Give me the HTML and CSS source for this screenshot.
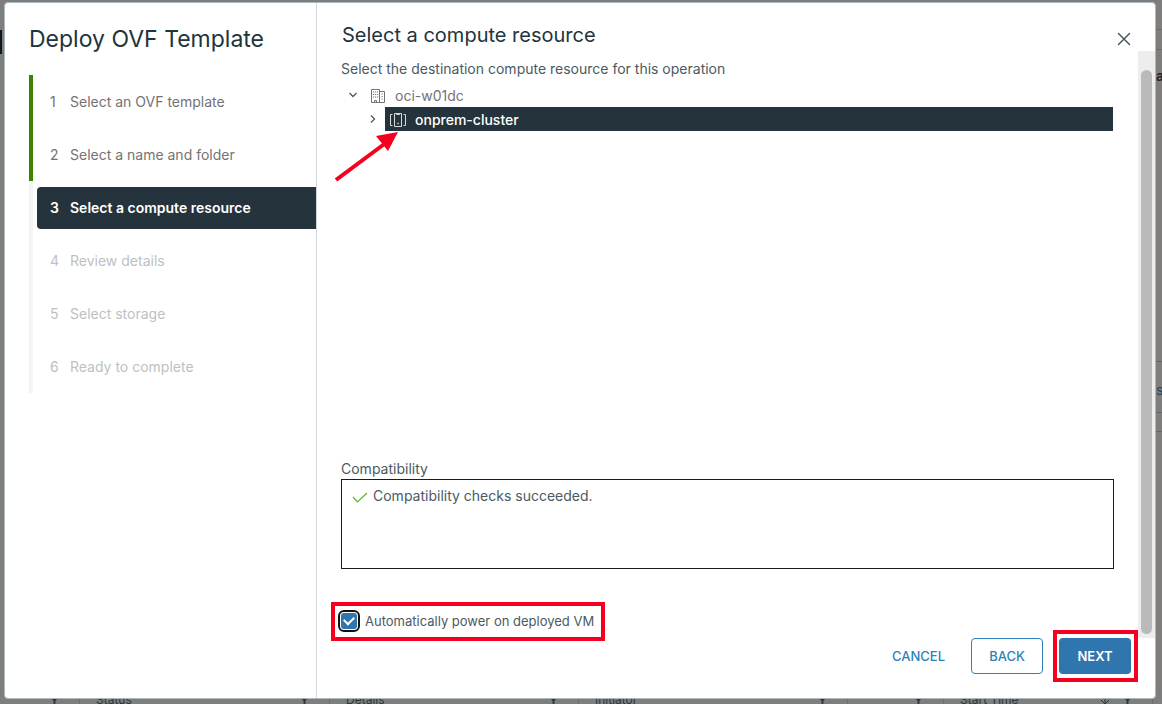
FILE: index.html
```html
<!DOCTYPE html>
<html lang="en">
<head>
<meta charset="utf-8">
<title>Deploy OVF Template</title>
<link rel="stylesheet" href="styles.css">
</head>
<body>
<svg class="defs" aria-hidden="true">
  <symbol id="filter" viewBox="0 0 10 12"><path d="M0 1h10L6 6v6H4V6z" fill="currentColor"/></symbol>
</svg>
<div class="workspace" aria-hidden="true">
  <div class="workspace-body">
    <div class="strip-left"><span class="notch"></span></div>
    <div class="strip-right">
      <span class="peek-head"></span>
      <span class="peek peek-dark">ag</span>
      <span class="peek peek-link">ss</span>
      <span class="peek-foot"></span>
    </div>
  </div>
  <div class="task-columns">
    <div class="col"><span></span><svg class="filter"><use href="#filter"/></svg></div>
    <div class="col"><span>Status</span><svg class="filter"><use href="#filter"/></svg></div>
    <div class="col"><span>Details</span><svg class="filter"><use href="#filter"/></svg></div>
    <div class="col"><span>Initiator</span><svg class="filter"><use href="#filter"/></svg></div>
    <div class="col"><span></span><svg class="filter"><use href="#filter"/></svg></div>
    <div class="col"><span>Start Time</span><svg class="sort" viewBox="0 0 10 12"><path d="M5 0v11M1 7l4 4 4-4" fill="none" stroke="currentColor"/></svg><svg class="filter"><use href="#filter"/></svg></div>
    <div class="col"></div>
  </div>
</div>

<div class="dialog" role="dialog" aria-labelledby="wizard-title">
  <nav class="steps-pane">
    <h1 class="wizard-title" id="wizard-title">Deploy OVF Template</h1>
    <ol class="steps">
      <li class="step done"><button class="step-button"><span class="num">1</span>Select an OVF template</button></li>
      <li class="step done"><button class="step-button"><span class="num">2</span>Select a name and folder</button></li>
      <li class="step current"><button class="step-button" aria-current="step"><span class="num">3</span>Select a compute resource</button></li>
      <li class="step"><button class="step-button" disabled><span class="num">4</span>Review details</button></li>
      <li class="step"><button class="step-button" disabled><span class="num">5</span>Select storage</button></li>
      <li class="step"><button class="step-button" disabled><span class="num">6</span>Ready to complete</button></li>
    </ol>
  </nav>

  <main class="page">
    <header class="page-header">
      <h2 class="page-title">Select a compute resource</h2>
      <button class="close" aria-label="Close">
        <svg width="14" height="14" viewBox="0 0 14 14"><path d="M1.500 1.500l11 11M12.500 1.500l-11 11" fill="none" stroke="currentColor" stroke-width="1.500" stroke-linecap="round"/></svg>
      </button>
    </header>

    <div class="page-body">
      <div class="content">
        <p class="intro">Select the destination compute resource for this operation</p>
        <div class="tree" role="tree">
          <div class="node" role="treeitem" aria-expanded="true">
            <button class="toggle" aria-label="Collapse"><svg width="10" height="10" viewBox="0 0 10 10"><path d="M1.500 3L5 6.500 8.500 3" fill="none" stroke="currentColor" stroke-width="1.300"/></svg></button>
            <span class="node-label">
              <svg width="16" height="16" viewBox="0 0 16 16" fill="none" stroke="currentColor"><path d="M1.500 14.500v-13h8v13zM9.500 3.500h5v11h-5M4.500 14.500v-2h2v2"/><path d="M3 4h1.200M5 4h1.200M7 4h1.200M3 6.500h1.200M5 6.500h1.200M7 6.500h1.200M3 9h1.200M5 9h1.200M7 9h1.200M11.500 6h1.200M11.500 8.500h1.200M11.500 11h1.200"/></svg>
              oci-w01dc
            </span>
          </div>
          <div class="node child" role="treeitem" aria-selected="true">
            <button class="toggle" aria-label="Expand"><svg width="10" height="10" viewBox="0 0 10 10"><path d="M3 1.500L6.500 5 3 8.500" fill="none" stroke="currentColor" stroke-width="1.300"/></svg></button>
            <span class="node-label selected">
              <svg width="16" height="16" viewBox="0 0 16 16" fill="none" stroke="#d5dadd"><path d="M2.500 2.500h-2v11h2M13.500 2.500h2v11h-2M4.500 1.500h7v13h-7zM6.500 1.500v1h3v-1"/><path d="M7.300 11.500h1.400" stroke-width="1.500"/></svg>
              onprem-cluster
            </span>
          </div>
          <svg class="arrow" width="66" height="52" viewBox="0 0 66 52" aria-hidden="true"><path d="M1 50L52 12" stroke="#f60020" stroke-width="4"/><path d="M63 2L41 6l12 15z" fill="#f60020"/></svg>
        </div>
        <section class="compat">
          <h3 class="compat-title">Compatibility</h3>
          <div class="compat-box">
            <svg width="16" height="16" viewBox="0 0 16 16"><path d="M1 8l4.500 5L15 4" fill="none" stroke="#5eb715" stroke-width="1.200"/></svg>
            <span>Compatibility checks succeeded.</span>
          </div>
        </section>
        <label class="power" for="power-on">
          <input class="power-check" type="checkbox" id="power-on" checked>
          Automatically power on deployed VM
        </label>
      </div>
      <div class="scroll-track"><div class="scroll-thumb"></div></div>
    </div>

    <footer class="actions">
      <button class="btn link">CANCEL</button>
      <button class="btn outline">BACK</button>
      <button class="btn primary">NEXT</button>
    </footer>
  </main>
</div>
</body>
</html>
```

FILE: styles.css
```css
* { box-sizing: border-box; }

body {
  margin: 0;
  height: 100vh;
  overflow: hidden;
  position: relative;
  background: #7f7e7c;
  color: #4b5a62;
  font: 14px/20px Inter, "Open Sans", sans-serif;
}

button { font: inherit; color: inherit; background: none; border: 0; padding: 0; text-align: left; }
h1, h2, h3, p, ol { margin: 0; padding: 0; font-weight: 400; }
svg { display: block; flex: none; }
.defs { position: absolute; width: 0; height: 0; }

/* Dimmed workspace behind the dialog */
.workspace { height: 100%; display: flex; flex-direction: column; }
.workspace-body { flex: 1; display: flex; justify-content: space-between; min-height: 0; }
.strip-left { width: 4px; padding-top: 30px; }
.notch { display: block; width: 2px; height: 24px; background: #10181b; }
.strip-right { width: 7px; display: flex; flex-direction: column; border-left: 1px solid #777; }
.peek-head { margin-top: 29px; height: 21px; border: 1px solid #6a6e70; border-width: 1px 0; }
.peek { overflow: hidden; white-space: nowrap; }
.peek-dark { margin-top: 16px; color: #1e2429; font-weight: 600; }
.peek-link { margin-top: 275px; height: 52px; padding-top: 18px; border: 1px solid #666; border-width: 1px 0; color: #1c4a66; }
.peek-foot { margin-top: 18px; border-top: 1px solid #666; }
.task-columns {
  height: 16px;
  overflow: hidden;
  display: grid;
  grid-template-columns: 80fr 250fr 249fr 269fr 96fr 209fr 9fr;
  font-size: 12px;
  line-height: 24px;
  color: #303538;
}
.col { display: flex; gap: 13px; padding: 0 20px 0 16px; border-right: 1px solid #6c6c6c; min-width: 0; }
.col > span { flex: 1; }
.col:last-child { border: 0; padding: 0; }
.filter { width: 9px; height: 12px; margin-top: 7px; }
.sort { width: 10px; height: 12px; margin-top: 5px; }

/* Dialog */
.dialog {
  position: absolute;
  inset: 2px 6px 5px 4px;
  display: flex;
  background: #fff;
  border: 1px solid #a9b9c2;
  border-radius: 4px;
}
.steps-pane { flex: 0 0 312px; border-right: 1px solid #d3dade; }
.wizard-title { padding: 20px 0 0 24px; font-size: 23px; line-height: 32px; color: #22343c; }
.steps { list-style: none; margin: 20px 0 0 24px; }
.step { height: 53px; padding: 6px 0 5px 4px; border-left: 4px solid #f4f4f4; color: #bcc1c4; }
.step.done { border-color: #3c8500; color: #737373; }
.step-button { display: flex; align-items: center; width: 100%; height: 42px; padding-left: 13px; border-radius: 4px 0 0 4px; }
.num { width: 20px; }
.current .step-button { background: #25333d; color: #fff; font-weight: 600; }

.page { flex: 1; display: flex; flex-direction: column; min-width: 0; }
.page-header { height: 48px; display: flex; justify-content: space-between; align-items: flex-start; padding: 18px 24px 0 25px; }
.page-title { font-size: 20px; line-height: 28px; color: #22343c; }
.close { width: 14px; height: 14px; margin-top: 11px; color: #4b5a62; }

.page-body { flex: 1; display: flex; min-height: 0; }
.content { flex: 1; display: flex; flex-direction: column; padding: 8px 24px 0 24px; min-width: 0; }
.tree { flex: 1; position: relative; padding: 4px 1px 0 4px; }
.node { display: flex; align-items: center; height: 24px; color: #737373; }
.child { padding-left: 20px; }
.toggle { width: 20px; padding-left: 3px; color: #4b5a62; }
.node-label { flex: 1; display: flex; align-items: center; gap: 9px; height: 24px; padding: 2px 0 0 5px; }
.selected { background: #25333d; color: #fff; font-weight: 500; }
.arrow { position: absolute; left: -6px; top: 51px; }

.compat-title { font-size: 14px; line-height: 20px; }
.compat-box { display: flex; gap: 5px; height: 90px; padding: 6px 10px; border: 1px solid #1b1b1b; }
.compat-box svg { margin-top: 3px; }

.power {
  align-self: flex-start;
  display: flex;
  align-items: center;
  gap: 8px;
  height: 39px;
  margin: 33px 0 -3px -10px;
  padding: 0 7px 2px 6px;
  border: 4px solid #f60020;
  font-size: 13px;
}
.power-check {
  appearance: none;
  width: 16px;
  height: 16px;
  margin: 0;
  border-radius: 3px;
  background: #2f76ae;
  outline: 2px solid #111;
  outline-offset: 1px;
  display: grid;
  place-items: center;
}
.power-check::after {
  content: "";
  width: 8px;
  height: 5px;
  margin-bottom: 3px;
  border: solid #fff;
  border-width: 0 0 2px 2px;
  transform: rotate(-45deg);
}

.scroll-track { width: 17px; padding: 19px 3px 4px; background: #ededed; }
.scroll-thumb { height: 100%; border-radius: 6px; background: #bababa; }

.actions { display: flex; justify-content: flex-end; gap: 16px; padding: 0 24px 24px; }
.btn { height: 36px; min-width: 72px; border: 1px solid transparent; border-radius: 4px; font-size: 13px; font-weight: 500; text-align: center; }
.link { padding: 0 9px; color: #2f81b7; }
.outline { border-color: #2f81b7; color: #2f81b7; }
.primary { position: relative; background: #2f76ae; color: #fff; font-weight: 600; }
.primary::after { content: ""; position: absolute; inset: -9px -8px -9px -7px; border: 4px solid #f60020; }
```
